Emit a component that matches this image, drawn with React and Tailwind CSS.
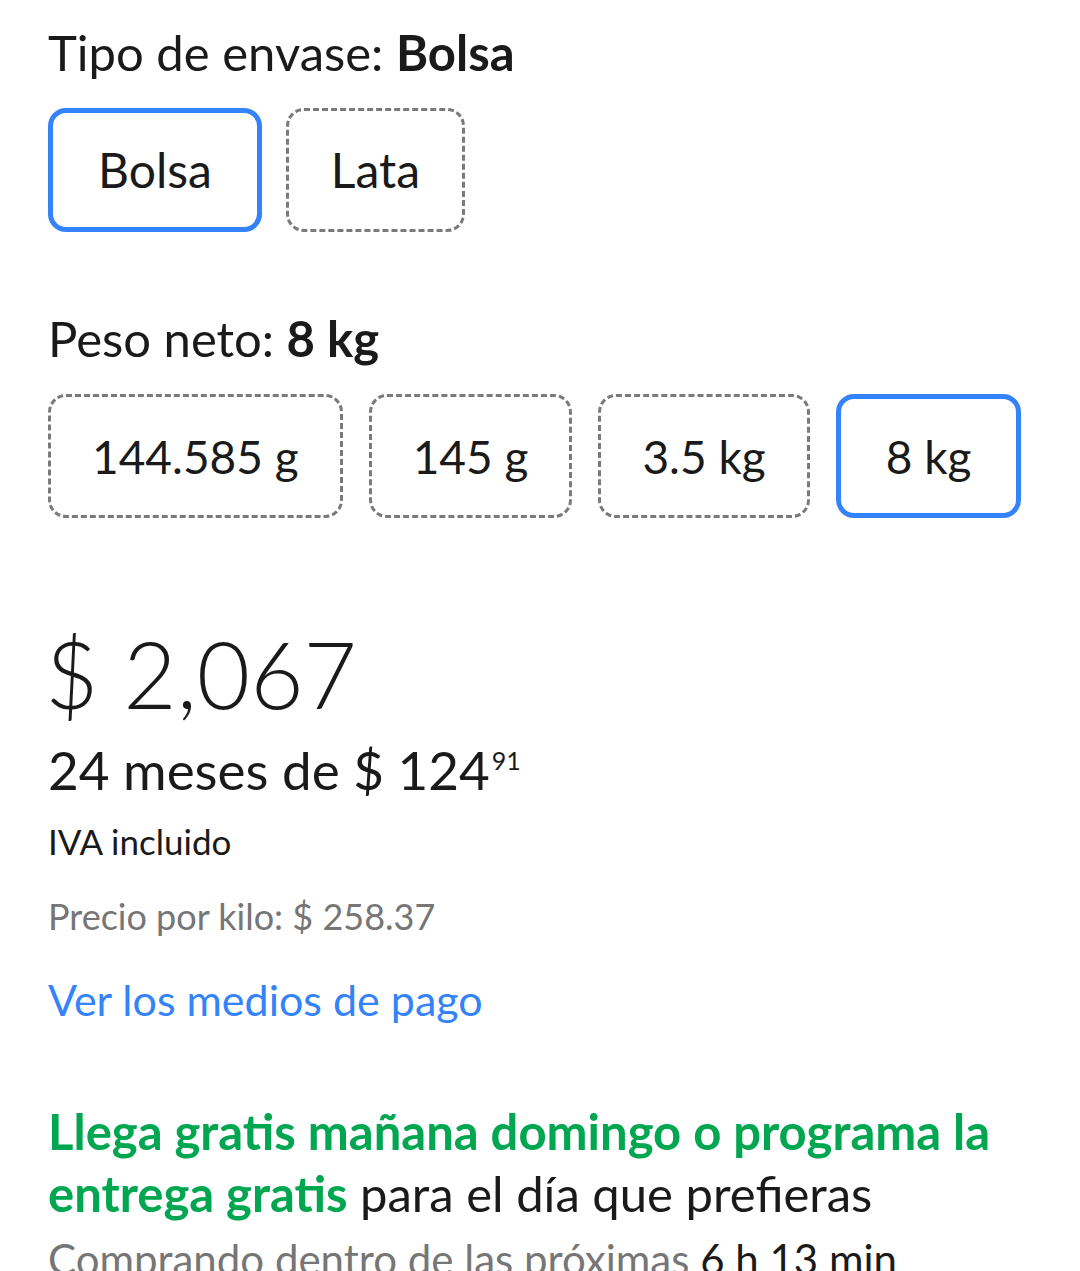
import React from 'react';

const font = { fontFamily: 'Lato, "Open Sans", sans-serif' };

const Option = ({ label, selected, size = 'lg' }) => {
    const text = size === 'lg' ? 'text-[48px]' : 'text-[46px]';
    const base = 'h-[124px] shrink-0 whitespace-nowrap flex items-center justify-center rounded-[18px] text-[#1a1a1a] ' + text;
    if (selected) {
        return <div className={base + ' px-[45px] border-[5px] border-[#3483fa]'}>{label}</div>;
    }
    return (
        <div className={base + (size === 'lg' ? ' px-[42px]' : ' px-[41px]') + ' border-[3px] border-dashed border-[#7a7a7a]'}>
            {label}
        </div>
    );
};

const App = () => {
    return (
        <div className="w-[1080px] h-[1271px] overflow-hidden bg-white pl-[48px] pr-[40px]" style={font}>
            <div className="pt-[22px] text-[49px] leading-[60px] text-[#1a1a1a]">
                Tipo de envase: <span className="font-bold">Bolsa</span>
            </div>
            <div className="mt-[26px] flex gap-[24px]">
                <Option label="Bolsa" selected />
                <Option label="Lata" />
            </div>

            <div className="mt-[76px] text-[49px] leading-[60px] text-[#1a1a1a]">
                Peso neto: <span className="font-bold">8 kg</span>
            </div>
            <div className="mt-[26px] flex gap-[26px]">
                <Option label="144.585 g" size="md" />
                <Option label="145 g" size="md" />
                <Option label="3.5 kg" size="md" />
                <Option label="8 kg" size="md" selected />
            </div>

            <div className="mt-[106px] -ml-[3px] text-[92px] leading-[100px] font-light text-[#1a1a1a]">$ 2,067</div>
            <div className="mt-[12px] flex items-start text-[53px] leading-[68px] text-[#1a1a1a]">
                <span>24 meses de $ 124</span>
                <span className="ml-[2px] mt-[6px] text-[25px] leading-[36px]">91</span>
            </div>
            <div className="mt-[13px] text-[35px] leading-[48px] text-[#1a1a1a]">IVA incluido</div>
            <div className="mt-[27px] text-[36px] leading-[48px] text-[#767676]">Precio por kilo: $ 258.37</div>
            <div className="mt-[34px] text-[43px] leading-[52px] text-[#3483fa]">Ver los medios de pago</div>

            <div className="mt-[74px] text-[49px] leading-[62px] text-[#1a1a1a]">
                <span className="font-bold text-[#00a650]">Llega gratis mañana domingo o programa la entrega gratis</span>{' '}
                para el día que prefieras
            </div>
            <div className="mt-[8px] text-[42px] leading-[54px] text-[#767676]">
                Comprando dentro de las próximas <span className="text-[#1a1a1a]">6 h 13 min</span>
            </div>
        </div>
    );
};

export default App;
